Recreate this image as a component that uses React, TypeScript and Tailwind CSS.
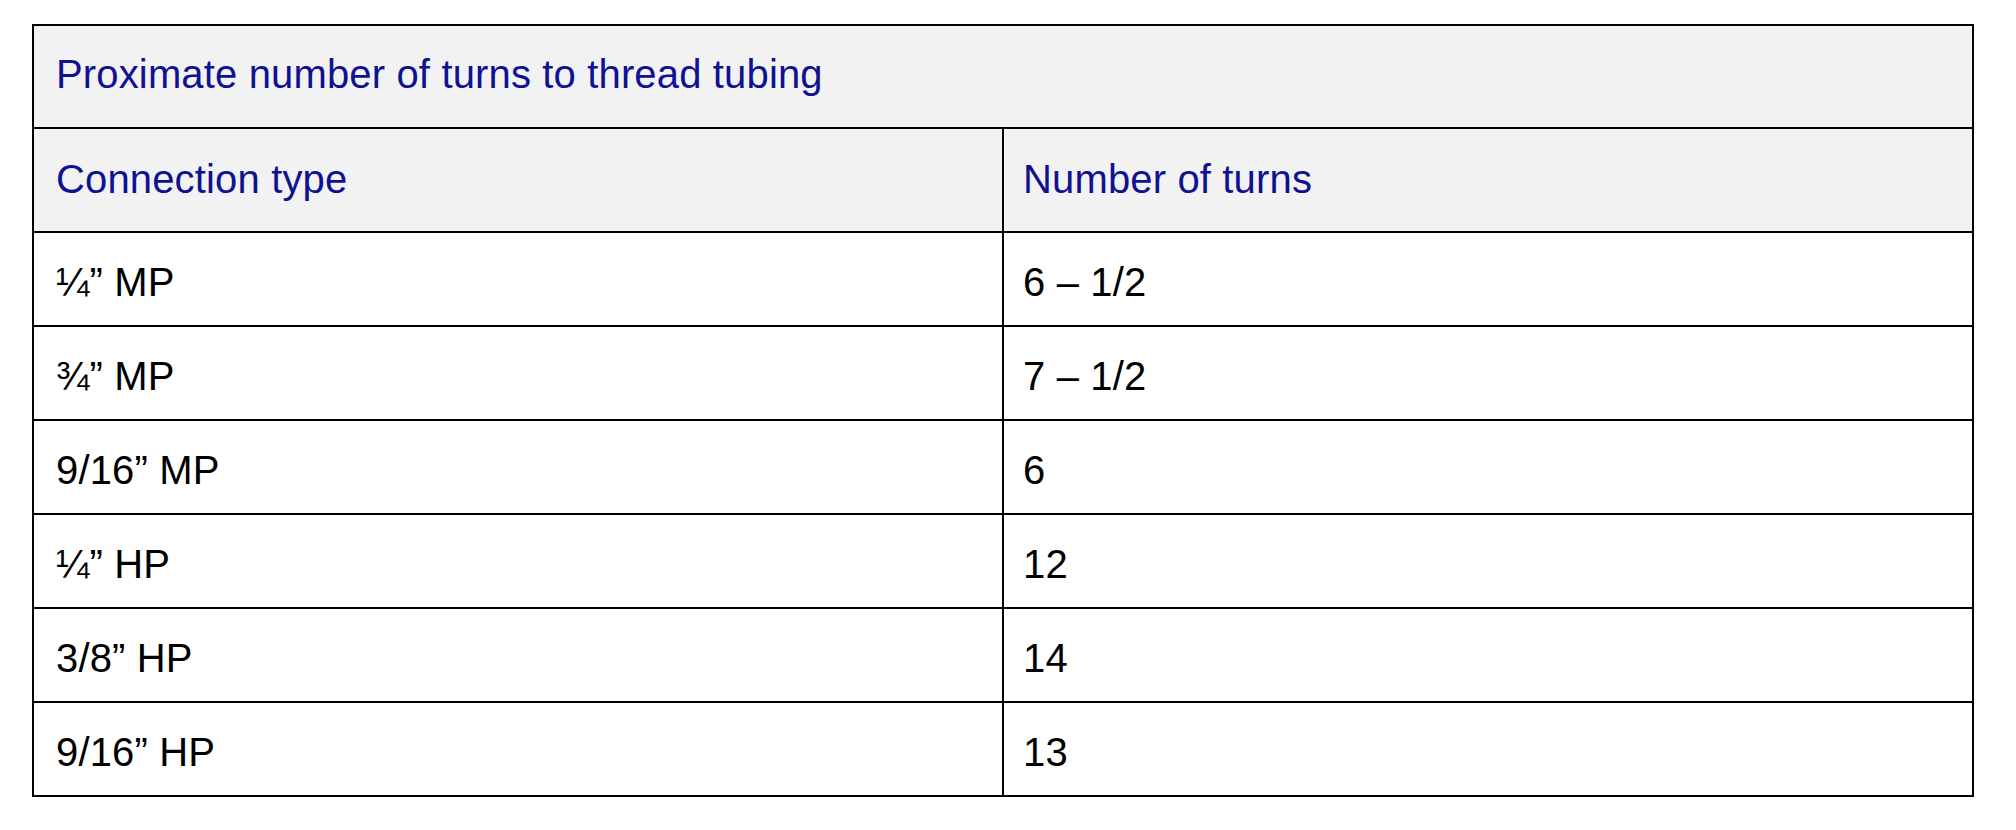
const rows: [string, string][] = [
  ["¼” MP", "6 – 1/2"],
  ["¾” MP", "7 – 1/2"],
  ["9/16” MP", "6"],
  ["¼” HP", "12"],
  ["3/8” HP", "14"],
  ["9/16” HP", "13"],
];

export default function App() {
  return (
    <div className="min-h-[830px] bg-white pl-[32px] pt-[24px] font-['Liberation_Sans',Arial,sans-serif] text-[40px] leading-[46px] tracking-[0.15px]">
      <div className="w-[1942px] border-2 border-black">
        {/* title */}
        <div className="h-[101px] bg-[#f2f2f2] pl-[22px] pt-[25px] text-[#0f1193]">
          Proximate number of turns to thread tubing
        </div>

        {/* header */}
        <div className="flex h-[104px] border-t-2 border-black bg-[#f2f2f2] text-[#0f1193]">
          <div className="w-[968px] pl-[22px] pt-[27px]">Connection type</div>
          <div className="flex-1 border-l-2 border-black pl-[19px] pt-[27px]">Number of turns</div>
        </div>

        {/* data */}
        {rows.map(([type, turns]) => (
          <div key={type} className="flex h-[94px] border-t-2 border-black text-black">
            <div className="w-[968px] pl-[22px] pt-[26px]">{type}</div>
            <div className="flex-1 border-l-2 border-black pl-[19px] pt-[26px]">{turns}</div>
          </div>
        ))}
      </div>
    </div>
  );
}
